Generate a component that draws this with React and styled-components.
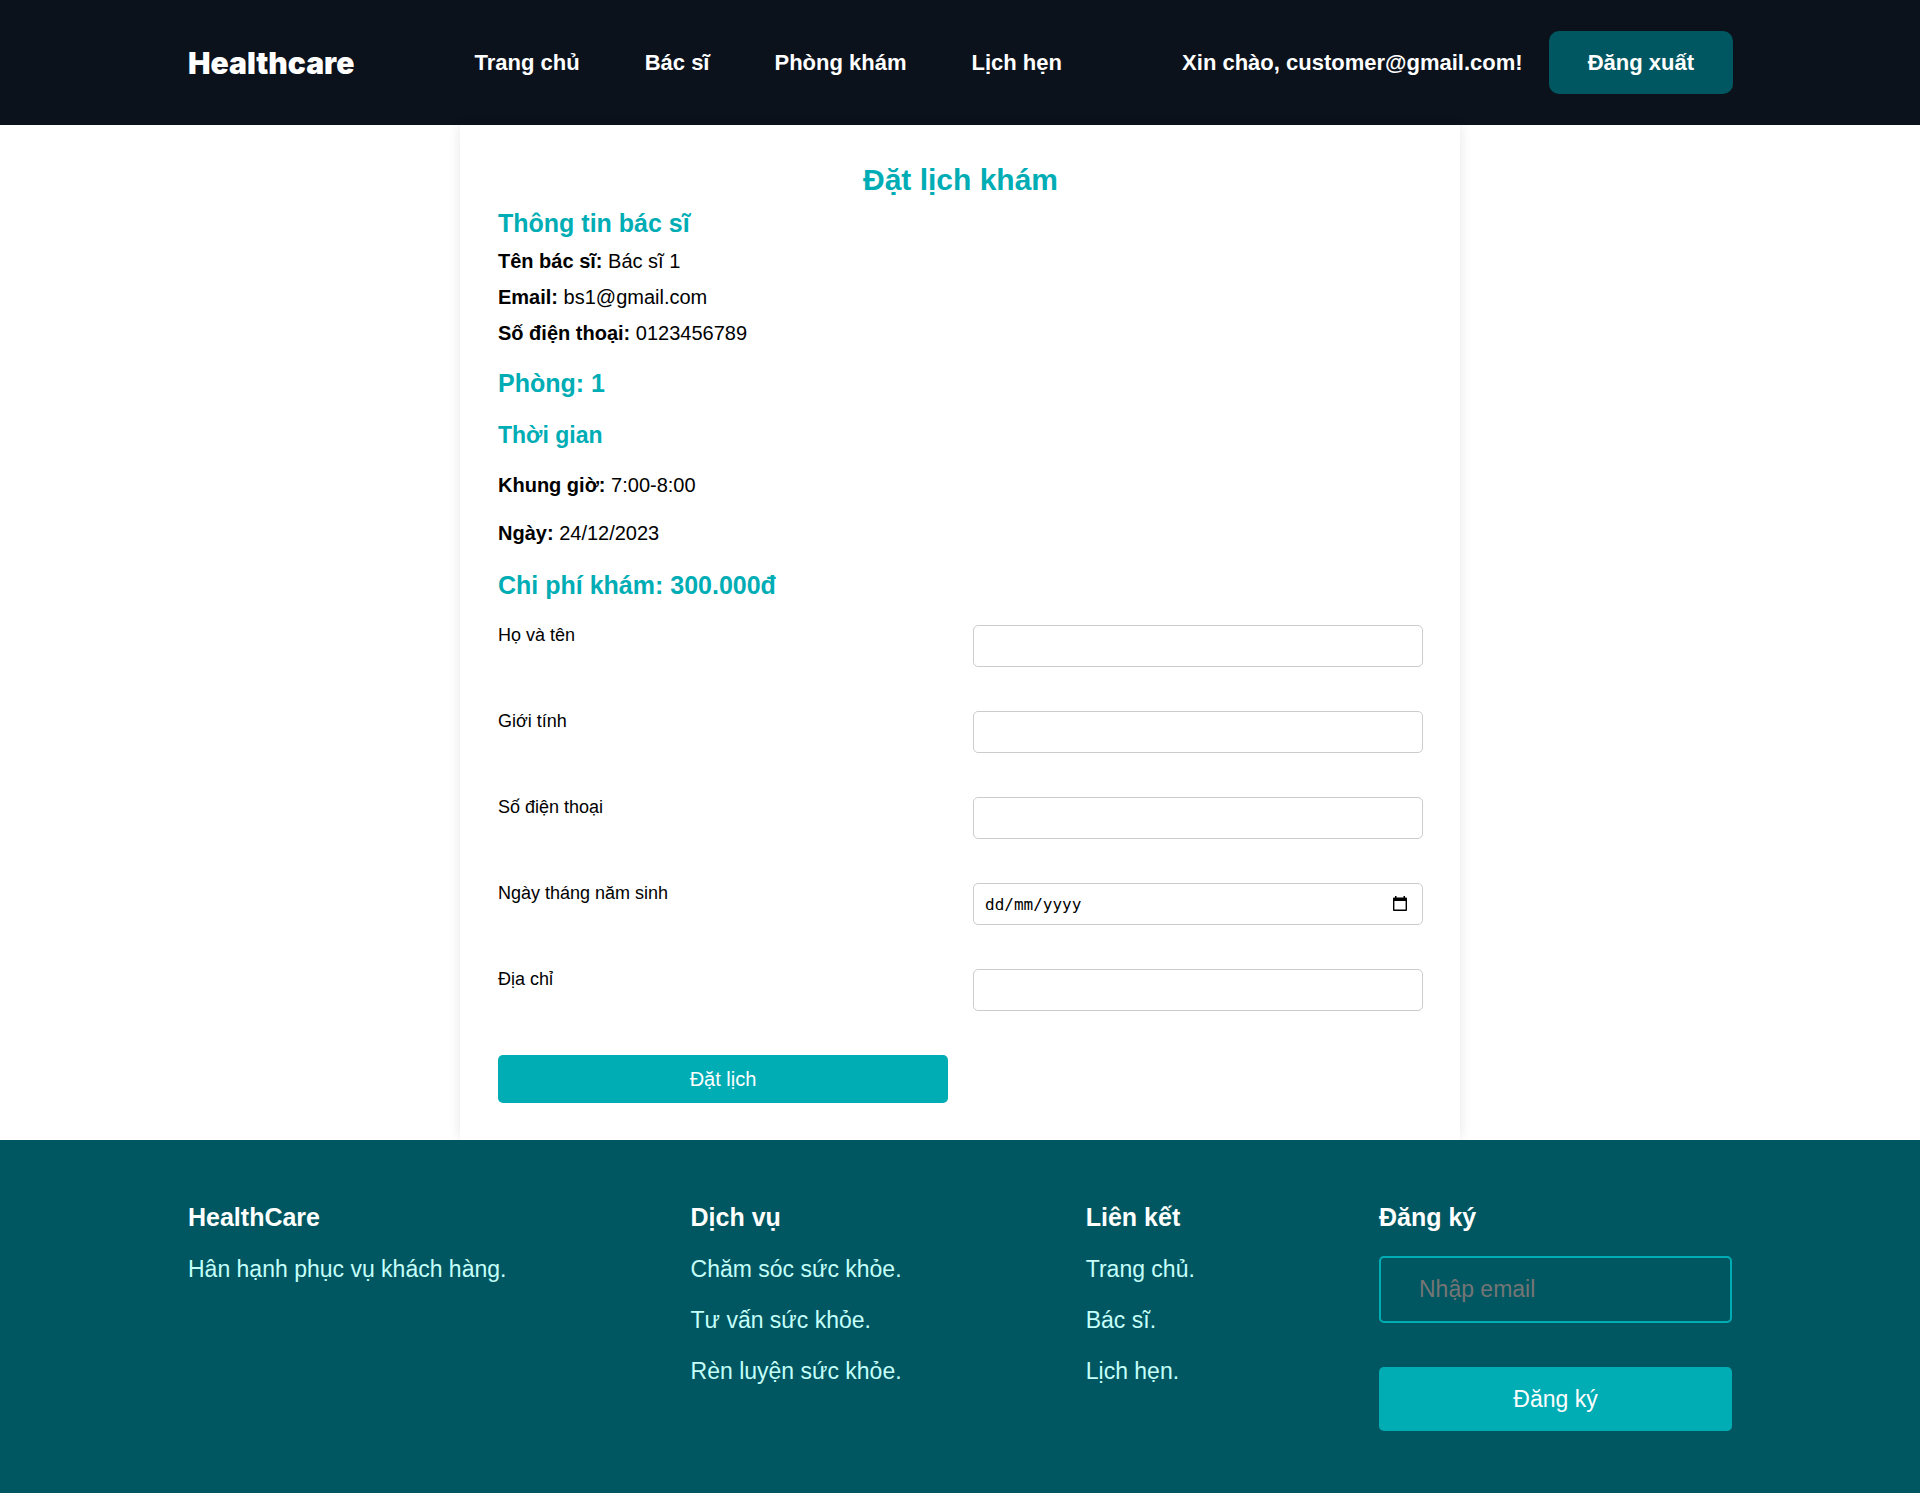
import React from 'react';
import styled, { createGlobalStyle } from 'styled-components';

const GlobalStyle = createGlobalStyle`
  *, *::before, *::after { box-sizing: border-box; }
  body {
    margin: 0;
    background: #fff;
    color: #000;
    font-family: Arial, "Liberation Sans", sans-serif;
  }
  h1, h2, h3, p, ul { margin: 0; padding: 0; }
  input, button { font-family: inherit; }
`;

const Header = styled.header`
  display: flex;
  align-items: center;
  justify-content: space-between;
  height: 125px;
  padding: 0 187px 0 188px;
  background: #0b121c;
  color: #fff;
  font-size: 22px;
  font-weight: 700;
`;

const Logo = styled.a`
  color: inherit;
  text-decoration: none;
  font-family: "Arial Black", Inter, sans-serif;
  font-size: 30px;
  font-weight: 900;
`;

const Nav = styled.nav`
  display: flex;
  gap: 65px;
`;

const NavLink = styled.a`
  color: inherit;
  text-decoration: none;
`;

const Account = styled.div`
  display: flex;
  align-items: center;
  gap: 26px;
`;

const LogoutButton = styled.button`
  height: 63px;
  padding: 0 39px;
  border: 0;
  border-radius: 10px;
  background: #005761;
  color: #fff;
  font-size: 22px;
  font-weight: 700;
`;

const Card = styled.main`
  max-width: 1000px;
  margin: 0 auto;
  padding: 38px 37px 37px 38px;
  background: #fff;
  box-shadow: 0 0 12px rgba(0, 0, 0, 0.1);
`;

const Title = styled.h1`
  color: #00adb5;
  font-size: 30px;
  line-height: 34px;
  text-align: center;
`;

const Heading = styled.h2`
  margin: ${({ $gap }) => $gap}px 0;
  color: #00adb5;
  font-size: ${({ $small }) => ($small ? 23 : 25)}px;
  line-height: 28px;
`;

const Detail = styled.p`
  margin-bottom: ${({ $gap }) => $gap}px;
  font-size: 20px;
  line-height: 24px;
`;

const Form = styled.form`
  display: grid;
  grid-template-columns: 1fr 1fr;
  column-gap: 25px;
  row-gap: 44px;
`;

const Label = styled.label`
  font-size: 18px;
  line-height: 20px;
`;

const Field = styled.div`
  display: flex;
  align-items: center;
  height: 42px;
  border: 1px solid #ccc;
  border-radius: 5px;
  background: #fff;
`;

const Input = styled.input`
  flex: 1;
  min-width: 0;
  height: 100%;
  padding: 0 11px;
  border: 0;
  background: transparent;
  color: #000;
  font-family: "DejaVu Sans Mono", monospace;
  font-size: 16px;
  &::placeholder { color: #000; opacity: 1; }
`;

const CalendarButton = styled.button`
  display: flex;
  margin-right: 15px;
  padding: 0;
  border: 0;
  background: none;
  color: #000;
`;

const SubmitButton = styled.button`
  height: 48px;
  border: 0;
  border-radius: 5px;
  background: #00adb5;
  color: #fff;
  font-size: 20px;
`;

const Footer = styled.footer`
  position: relative;
  display: flex;
  align-items: flex-start;
  justify-content: space-between;
  padding: 62px 188px;
  background: #005761;
`;

const FooterHeading = styled.h3`
  margin-bottom: 24px;
  color: #fff;
  font-size: 25px;
  line-height: 30px;
`;

const FooterList = styled.ul`
  display: grid;
  gap: 25px;
  list-style: none;
  color: #c4fffa;
  font-size: 23px;
  line-height: 26px;
`;

const FooterLink = styled.a`
  color: inherit;
  text-decoration: none;
`;

const Signup = styled.form`
  display: grid;
  gap: 44px;
  width: 353px;
`;

const SignupInput = styled.input`
  width: 100%;
  height: 67px;
  padding: 0 38px;
  border: 2px solid #00adb5;
  border-radius: 5px;
  background: transparent;
  color: #fff;
  font-size: 23px;
  &::placeholder { color: #757575; }
`;

const SignupButton = styled.button`
  height: 64px;
  border: 0;
  border-radius: 5px;
  background: #00adb5;
  color: #fff;
  font-size: 23px;
`;

const navItems = ['Trang chủ', 'Bác sĩ', 'Phòng khám', 'Lịch hẹn'];

const fields = [
  { id: 'name', label: 'Họ và tên' },
  { id: 'gender', label: 'Giới tính' },
  { id: 'phone', label: 'Số điện thoại', type: 'tel' },
  { id: 'birthday', label: 'Ngày tháng năm sinh', placeholder: 'dd/mm/yyyy', calendar: true },
  { id: 'address', label: 'Địa chỉ' },
];

const services = ['Chăm sóc sức khỏe.', 'Tư vấn sức khỏe.', 'Rèn luyện sức khỏe.'];
const links = ['Trang chủ.', 'Bác sĩ.', 'Lịch hẹn.'];

function CalendarIcon() {
  return (
    <svg width="14" height="16" viewBox="0 0 14 16" aria-hidden="true">
      <path
        fill="currentColor"
        fillRule="evenodd"
        d="M2 0h1.5v1.5h7V0H12v1.5h1A1 1 0 0 1 14 2.5V14a1 1 0 0 1-1 1H1a1 1 0 0 1-1-1V2.5A1 1 0 0 1 1 1.500h1zM1.400 5v8.600h11.200V5z"
      />
    </svg>
  );
}

function FooterLinks({ title, items }) {
  return (
    <section>
      <FooterHeading>{title}</FooterHeading>
      <FooterList>
        {items.map((item) => (
          <li key={item}><FooterLink href="#">{item}</FooterLink></li>
        ))}
      </FooterList>
    </section>
  );
}

export default function App() {
  return (
    <>
      <GlobalStyle />
      <Header>
        <Logo href="#">Healthcare</Logo>
        <Nav>
          {navItems.map((item) => <NavLink key={item} href="#">{item}</NavLink>)}
        </Nav>
        <Account>
          <span>Xin chào, customer@gmail.com!</span>
          <LogoutButton type="button">Đăng xuất</LogoutButton>
        </Account>
      </Header>
      <Card>
        <Title>Đặt lịch khám</Title>
        <Heading $gap={12}>Thông tin bác sĩ</Heading>
        <Detail $gap={12}><strong>Tên bác sĩ:</strong> Bác sĩ 1</Detail>
        <Detail $gap={12}><strong>Email:</strong> bs1@gmail.com</Detail>
        <Detail $gap={24}><strong>Số điện thoại:</strong> 0123456789</Detail>
        <Heading $gap={24}>Phòng: 1</Heading>
        <Heading $gap={24} $small>Thời gian</Heading>
        <Detail $gap={24}><strong>Khung giờ:</strong> 7:00-8:00</Detail>
        <Detail $gap={24}><strong>Ngày:</strong> 24/12/2023</Detail>
        <Heading $gap={26}>Chi phí khám: 300.000đ</Heading>
        <Form onSubmit={(event) => event.preventDefault()}>
          {fields.map(({ id, label, type = 'text', placeholder, calendar }) => (
            <React.Fragment key={id}>
              <Label htmlFor={id}>{label}</Label>
              <Field>
                <Input id={id} type={type} placeholder={placeholder} />
                {calendar && (
                  <CalendarButton type="button" aria-label="Chọn ngày">
                    <CalendarIcon />
                  </CalendarButton>
                )}
              </Field>
            </React.Fragment>
          ))}
          <SubmitButton type="submit">Đặt lịch</SubmitButton>
        </Form>
      </Card>
      <Footer>
        <FooterLinks title="HealthCare" items={['Hân hạnh phục vụ khách hàng.']} />
        <FooterLinks title="Dịch vụ" items={services} />
        <FooterLinks title="Liên kết" items={links} />
        <section>
          <FooterHeading>Đăng ký</FooterHeading>
          <Signup onSubmit={(event) => event.preventDefault()}>
            <SignupInput type="email" placeholder="Nhập email" aria-label="Nhập email" />
            <SignupButton type="submit">Đăng ký</SignupButton>
          </Signup>
        </section>
      </Footer>
    </>
  );
}
